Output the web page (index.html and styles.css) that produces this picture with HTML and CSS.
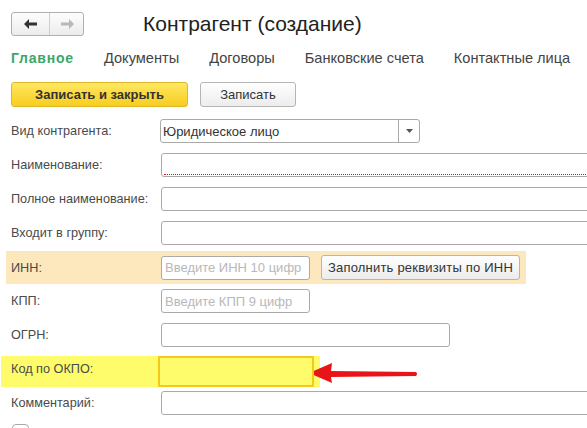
FILE: index.html
```html
<!DOCTYPE html>
<html lang="ru">
<head>
<meta charset="utf-8">
<title>Контрагент (создание)</title>
<link rel="stylesheet" href="styles.css">
</head>
<body>
<div class="page">
  <div class="header">
    <div class="navbtns">
      <span class="nav back"><svg width="16" height="12" viewBox="0 0 16 12"><path d="M1 6 L6 1 L6 4.5 L14 4.5 L14 7.5 L6 7.5 L6 11 Z" fill="#333"/></svg></span>
      <span class="nav fwd"><svg width="16" height="12" viewBox="0 0 16 12"><path d="M15 6 L10 1 L10 4.5 L2 4.5 L2 7.5 L10 7.5 L10 11 Z" fill="#b8b8b8"/></svg></span>
    </div>
    <h1 class="title">Контрагент (создание)</h1>
  </div>
  <div class="tabs">
    <span class="tab active">Главное</span>
    <span class="tab">Документы</span>
    <span class="tab">Договоры</span>
    <span class="tab">Банковские счета</span>
    <span class="tab">Контактные лица</span>
  </div>
  <div class="toolbar">
    <button class="btn primary">Записать и закрыть</button>
    <button class="btn">Записать</button>
    <button class="btn more"></button>
  </div>
  <div class="form">
    <div class="row">
      <span class="label">Вид контрагента:</span>
      <div class="field select"><span class="value">Юридическое лицо</span><span class="drop"><svg width="7" height="4" viewBox="0 0 7 4"><path d="M0 0 H7 L3.5 4 Z" fill="#555"/></svg></span></div>
    </div>
    <div class="row">
      <span class="label">Наименование:</span>
      <div class="field wide required"><span class="req-line"></span></div>
    </div>
    <div class="row">
      <span class="label">Полное наименование:</span>
      <div class="field wide"></div>
    </div>
    <div class="row">
      <span class="label">Входит в группу:</span>
      <div class="field wide"></div>
    </div>
    <div class="row inn">
      <span class="label">ИНН:</span>
      <div class="field short"><span class="placeholder">Введите ИНН 10 цифр</span></div>
      <button class="btn fill">Заполнить реквизиты по ИНН</button>
    </div>
    <div class="row">
      <span class="label">КПП:</span>
      <div class="field short"><span class="placeholder">Введите КПП 9 цифр</span></div>
    </div>
    <div class="row">
      <span class="label">ОГРН:</span>
      <div class="field medium"></div>
    </div>
    <div class="row okpo">
      <span class="label">Код по ОКПО:</span>
      <div class="field okpo-field"></div>
      <svg class="arrow" width="112" height="24" viewBox="0 0 112 24"><path d="M0 10 L23 0 L22 8 L107 9 Q109 11 107 13 L22 14 L23 20 Z" fill="#e8141a"/></svg>
    </div>
    <div class="row">
      <span class="label">Комментарий:</span>
      <div class="field wide"></div>
    </div>
    <div class="row last">
      <span class="check"></span>
    </div>
  </div>
</div>
</body>
</html>
```
FILE: styles.css
```css
html, body {
  margin: 0;
  padding: 0;
  overflow: hidden;
  background: #fff;
}
body {
  font-family: "Liberation Sans", Arial, sans-serif;
  font-size: 13px;
  color: #4a4a4a;
  height: 428px;
}
.page {
  width: 620px;
  padding: 12px 0 0 11px;
}
.header {
  display: flex;
  align-items: center;
  height: 24px;
}
.navbtns {
  display: flex;
  width: 71px;
  height: 22px;
  border: 1px solid #b0b0b0;
  border-radius: 3px;
  background: linear-gradient(#fdfdfd, #ececec);
}
.nav {
  flex: 1;
  display: flex;
  align-items: center;
  justify-content: center;
}
.nav.back {
  border-right: 1px solid #cfcfcf;
  flex: 0 0 37px;
}
.title {
  margin: 0 0 0 59px;
  font-size: 21px;
  font-weight: normal;
  color: #222;
  line-height: 24px;
}
.tabs {
  display: flex;
  gap: 30px;
  margin-top: 12px;
  height: 20px;
  line-height: 20px;
  font-size: 14.6px;
  color: #444;
}
.tab.active {
  color: #3aa76a;
  font-weight: bold;
  font-size: 14px;
  letter-spacing: 0.8px;
}
.toolbar {
  display: flex;
  margin-top: 14px;
  height: 25px;
}
.btn {
  font-family: inherit;
  font-size: 13px;
  color: #333;
  height: 25px;
  border: 1px solid #b5b5b5;
  border-radius: 3px;
  background: linear-gradient(#ffffff, #ececec);
  padding: 0;
}
.btn.primary {
  width: 177px;
  font-weight: bold;
  border-color: #e0b92a;
  background: linear-gradient(#ffe761, #f7cd1f);
  color: #333;
}
.toolbar .btn + .btn {
  margin-left: 12px;
  width: 96px;
}
.toolbar .btn.more {
  margin-left: auto;
  width: 40px;
}
.form {
  margin-top: 7px;
}
.row {
  display: flex;
  align-items: center;
  height: 34px;
  position: relative;
}
.label {
  flex: 0 0 150px;
  font-size: 12.7px;
  color: #4a4a4a;
  position: relative;
  z-index: 1;
}
.field {
  height: 22px;
  border: 1px solid #aaa;
  border-radius: 3px;
  background: #fff;
  box-sizing: content-box;
  display: flex;
  align-items: center;
  position: relative;
  z-index: 1;
}
.field.wide {
  flex: 1;
}
.field.select {
  width: 258px;
  margin-left: -1px;
}
.value {
  flex: 1;
  padding-left: 2px;
  color: #333;
}
.drop {
  width: 20px;
  height: 22px;
  border-left: 1px solid #aaa;
  display: flex;
  align-items: center;
  justify-content: center;
}
.field.required {
  align-items: flex-end;
  padding: 0 2px;
  height: 22px;
}
.req-line {
  flex: 1;
  height: 2px;
  border-bottom: 1px dotted #e01010;
  margin-bottom: 1px;
}
.field.short {
  width: 147px;
}
.field.medium {
  width: 287px;
}
.placeholder {
  color: #b8b8b8;
  padding-left: 3px;
}
.row.inn {
  width: 520px;
  margin-left: -5px;
  padding-left: 5px;
  box-sizing: border-box;
  background: #fde8bd;
  height: 33px;
  margin-top: 1px;
}
.btn.fill {
  width: 199px;
  margin-left: 11px;
  height: 25px;
  position: relative;
  z-index: 1;
  letter-spacing: 0.2px;
}
.row.okpo::before {
  content: "";
  position: absolute;
  left: -10px;
  top: 4px;
  width: 319px;
  height: 31px;
  background: #fefc6a;
}
.field.okpo-field {
  width: 152px;
  height: 27px;
  margin-left: -3px;
  margin-top: 5px;
  border: 2px solid #f7c81c;
  border-radius: 1px;
  background: #fefc6a;
}
.arrow {
  position: absolute;
  left: 298px;
  top: 11px;
}
.row.last {
  align-items: flex-start;
}
.check {
  display: block;
  width: 15px;
  height: 15px;
  margin: 4px 0 0 1px;
  border: 1px solid #aaa;
  border-radius: 4px;
}
```
